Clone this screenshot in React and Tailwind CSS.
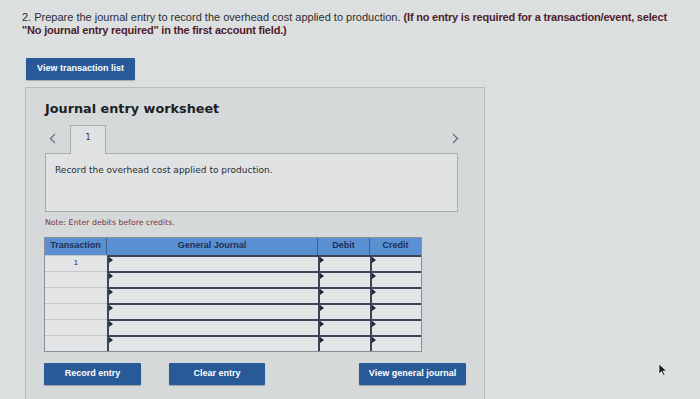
import React from 'react'

const rows = [1, 2, 3, 4, 5, 6]

function Marker() {
  return (
    <span className="absolute left-0 top-0 h-0 w-0 border-y-[3px] border-l-[4px] border-y-transparent border-l-[#1f2a3a]" />
  )
}

function Btn({ children, className = '' }) {
  return (
    <button
      type="button"
      className={`flex h-[22px] items-center justify-center rounded-[1px] bg-[#285a98] text-[9px] font-bold text-white shadow-[0_1px_1px_rgba(0,0,0,0.25)] ${className}`}
    >
      {children}
    </button>
  )
}

function Chevron({ left }) {
  return (
    <svg width="7" height="11" viewBox="0 0 7 11" className="text-[#6b6f75]">
      <path
        d={left ? 'M6 1 L1.5 5.5 L6 10' : 'M1 1 L5.5 5.5 L1 10'}
        fill="none"
        stroke="currentColor"
        strokeWidth="1.3"
      />
    </svg>
  )
}

export default function App() {
  return (
    <div className="relative flex h-[399px] w-[700px] flex-col overflow-hidden bg-[#dcdfe0] font-['Liberation_Sans',Arial,sans-serif] text-[#2a2d33]">
      <p className="ml-[22px] mt-[11px] text-[11px] leading-[13px]">
        2. Prepare the journal entry to record the overhead cost applied to production.{' '}
        <b className="tracking-[-0.2px] text-[#4e1d2b]">
          (If no entry is required for a transaction/event, select
          <br />
          "No journal entry required" in the first account field.)
        </b>
      </p>

      <Btn className="ml-[26px] mt-[21px] w-[109px]">View transaction list</Btn>

      <div className="ml-[25px] mt-[7px] flex w-[460px] flex-1 flex-col border border-b-0 border-[#b9bcbe] bg-[#d6d9da] pl-[19px] font-['DejaVu_Sans',Verdana,sans-serif]">
        <h1 className="mt-[12px] text-[12.8px] font-bold leading-[18px] text-[#1c1f24]">Journal entry worksheet</h1>

        <div className="mt-[7px] flex h-[28px] w-[418px] items-end">
          <span className="mb-[9px] ml-[4px] w-[21px]">
            <Chevron left />
          </span>
          <div className="relative z-10 -mb-px flex h-[29px] w-[36px] items-start justify-center border border-b-0 border-[#a9adb0] bg-[#dfe1e2] pt-[6px] text-[8px] text-[#2a2d33]">
            1
          </div>
          <span className="mb-[9px] ml-auto mr-[4px]">
            <Chevron />
          </span>
        </div>

        <div className="h-[59px] w-[413px] border border-[#a9adb0] bg-[#e0e2e3] pl-[9px] pt-[10px] text-[9px] text-[#2a2d33]">
          Record the overhead cost applied to production.
        </div>

        <p className="mt-[5px] text-[7.8px] text-[#7a3640]">Note: Enter debits before credits.</p>

        <div className="ml-[-1px] mt-[8px] w-[378px] border border-[#8a9098] text-[9px]">
          <div className="grid h-[17px] grid-cols-[62px_211px_52px_1fr] bg-[#5a8fd2] font-['Liberation_Sans',Arial,sans-serif] font-bold text-[#1d2f55]">
            <div className="flex items-center justify-center border-r border-[#3f5f8c]">Transaction</div>
            <div className="flex items-center justify-center border-r border-[#3f5f8c]">General Journal</div>
            <div className="flex items-center justify-center border-r border-[#3f5f8c]">Debit</div>
            <div className="flex items-center justify-center">Credit</div>
          </div>
          {rows.map((r) => (
            <div key={r} className="grid h-[16px] grid-cols-[62px_211px_52px_1fr]">
              <div className="flex items-start justify-center border-t border-[#c4c7c9] bg-[#e2e4e5] pt-[1px] font-['Liberation_Sans',Arial,sans-serif] text-[8px] text-[#2a2d33]">
                {r === 1 ? '1' : ''}
              </div>
              <div className="relative border-l-2 border-t-2 border-[#3b4656] bg-[#e3e5e6]">
                <Marker />
              </div>
              <div className="relative border-l-2 border-t-2 border-[#3b4656] bg-[#e3e5e6]">
                <Marker />
              </div>
              <div className="relative border-l-2 border-t-2 border-[#3b4656] bg-[#e3e5e6]">
                <Marker />
              </div>
            </div>
          ))}
        </div>

        <div className="mt-[11px] flex w-[421px] font-['Liberation_Sans',Arial,sans-serif]">
          <Btn className="ml-[-1px] w-[97px]">Record entry</Btn>
          <Btn className="ml-[28px] w-[96px]">Clear entry</Btn>
          <Btn className="ml-auto w-[107px]">View general journal</Btn>
        </div>
      </div>

      <svg className="absolute left-[658px] top-[364px]" width="9" height="12" viewBox="0 0 9 12">
        <path d="M1 0 L1 10 L3.5 7.5 L5.5 11.5 L7 10.8 L5 7 L8.5 7 Z" fill="#1b1d22" stroke="#ffffff" strokeWidth="0.6" />
      </svg>
    </div>
  )
}
